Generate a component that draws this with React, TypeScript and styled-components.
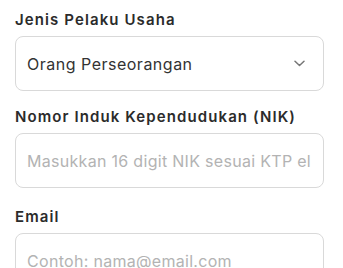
import React from "react";
import styled, { createGlobalStyle } from "styled-components";

const Global = createGlobalStyle`
  html, body { margin: 0; padding: 0; background: #fff; }
  body { font-family: Inter, "Open Sans", sans-serif; }
  * { box-sizing: border-box; }
`;

const Form = styled.div`
  display: flex;
  flex-direction: column;
  padding: 10px 19px 0 15px;
`;

const Field = styled.div<{ $gap?: number }>`
  display: flex;
  flex-direction: column;
  margin-bottom: ${(p) => p.$gap ?? 0}px;
`;

const Label = styled.label`
  font-size: 15px;
  font-weight: 600;
  letter-spacing: 1.1px;
  color: #2b2b2b;
  line-height: 20px;
  margin-bottom: 6px;
`;

const Box = styled.div<{ $padRight?: number }>`
  height: 55px;
  border: 1px solid #d9d9d9;
  border-radius: 8px;
  display: flex;
  align-items: center;
  padding: 0 ${(p) => p.$padRight ?? 12}px 0 11px;
  background: #fff;
  overflow: hidden;
`;

const Value = styled.span`
  flex: 1;
  font-size: 16px;
  letter-spacing: 0.5px;
  color: #333;
`;

const Input = styled.input`
  flex: 1;
  min-width: 0;
  border: none;
  outline: none;
  padding: 0;
  font-family: inherit;
  font-size: 16px;
  letter-spacing: 0.3px;
  color: #333;
  background: transparent;
  &::placeholder { color: #b3b3b3; }
`;

const Chevron = () => (
  <svg width="11" height="7" viewBox="0 0 11 7" fill="none">
    <path d="M1 1.2 L5.5 5.5 L10 1.2" stroke="#777" strokeWidth="1.5" strokeLinecap="round" strokeLinejoin="round" />
  </svg>
);

export default function App() {
  return (
    <>
      <Global />
      <Form>
        <Field $gap={16}>
          <Label>Jenis Pelaku Usaha</Label>
          <Box $padRight={18}>
            <Value>Orang Perseorangan</Value>
            <Chevron />
          </Box>
        </Field>
        <Field $gap={19}>
          <Label>Nomor Induk Kependudukan (NIK)</Label>
          <Box>
            <Input placeholder="Masukkan 16 digit NIK sesuai KTP elektronik" />
          </Box>
        </Field>
        <Field>
          <Label>Email</Label>
          <Box>
            <Input placeholder="Contoh: nama@email.com" />
          </Box>
        </Field>
      </Form>
    </>
  );
}
